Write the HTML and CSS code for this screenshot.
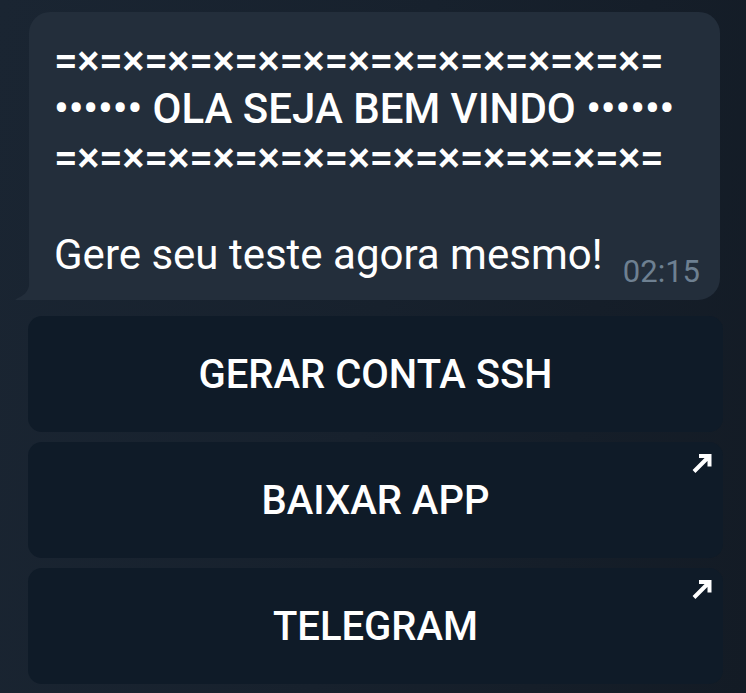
FILE: index.html
```html
<!DOCTYPE html>
<html lang="pt">
<head>
<meta charset="utf-8">
<link rel="stylesheet" href="styles.css">
</head>
<body>
<div class="chat">
  <div class="bubble">
    <svg class="tail" width="16" height="22" viewBox="0 0 16 22"><path d="M16 0 C16 11 12 17 3 20.5 Q0 22 3 22 L16 22 Z" fill="#232e3b"/></svg>
    <div class="head sep">=×=×=×=×=×=×=×=×=×=×=×=×=×=</div>
    <div class="head">•••••• OLA SEJA BEM VINDO ••••••</div>
    <div class="head sep">=×=×=×=×=×=×=×=×=×=×=×=×=×=</div>
    <div class="blank">&nbsp;</div>
    <div class="last">
      <span class="msg">Gere seu teste agora mesmo!</span>
      <span class="time">02:15</span>
    </div>
  </div>
  <div class="buttons">
    <div class="btn">GERAR CONTA SSH</div>
    <div class="btn">BAIXAR APP
      <svg class="arrow" width="22" height="22" viewBox="0 0 22 22"><path d="M3 19.5 L17.5 5 M8 4 H18.5 V14.5" fill="none" stroke="#fff" stroke-width="4"/></svg>
    </div>
    <div class="btn">TELEGRAM
      <svg class="arrow" width="22" height="22" viewBox="0 0 22 22"><path d="M3 19.5 L17.5 5 M8 4 H18.5 V14.5" fill="none" stroke="#fff" stroke-width="4"/></svg>
    </div>
  </div>
</div>
</body>
</html>
```
FILE: styles.css
```css
* { box-sizing: border-box; }
html, body { margin: 0; height: 100%; }
body {
  background: linear-gradient(100deg, #1a2532 0%, #17212d 50%, #131b25 100%);
  font-family: Roboto, "Noto Sans", sans-serif;
  color: #fff;
  overflow: hidden;
}
.chat {
  padding: 12px 23px 0 28px;
}
.bubble {
  position: relative;
  margin: 0 3px 0 1px;
  background: #232e3b;
  border-radius: 21px 21px 22px 0;
  padding: 24.5px 20px 13px 25px;
  font-size: 42px;
  line-height: 48.7px;
}
.tail {
  position: absolute;
  left: -15px;
  bottom: 0;
}
.head {
  font-weight: 500;
  white-space: nowrap;
}
.sep {
  letter-spacing: -0.45px;
}
.last {
  display: flex;
  justify-content: space-between;
  align-items: flex-end;
}
.msg {
  margin-bottom: 7px;
  white-space: nowrap;
}
.time {
  font-size: 31px;
  line-height: 31px;
  color: #6e8091;
}
.buttons {
  margin-top: 16px;
  display: flex;
  flex-direction: column;
  gap: 10px;
}
.btn {
  position: relative;
  height: 116px;
  border-radius: 14px;
  background: #0f1b28;
  display: flex;
  align-items: center;
  justify-content: center;
  font-size: 40px;
  font-weight: 500;
}
.arrow {
  position: absolute;
  top: 10px;
  right: 10px;
}
```
